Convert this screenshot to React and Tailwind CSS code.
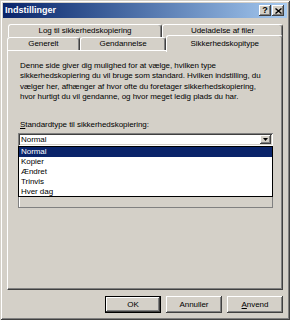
import React from "react";

const raised =
  "shadow-[inset_-1px_-1px_0_#404040,inset_1px_1px_0_#ffffff,inset_-2px_-2px_0_#808080]";

function TitleBtn({ children }) {
  return (
    <div className={`w-[12px] h-[11px] bg-[#d4d0c8] flex items-center justify-center ${raised}`}>
      {children}
    </div>
  );
}

function Tab({ w, label, className = "" }) {
  return (
    <div
      className={`h-full flex items-center justify-center border-t border-l border-white border-r border-r-[#404040] rounded-t-[3px] shadow-[inset_-1px_0_0_#808080] bg-[#d4d0c8] whitespace-nowrap ${w} ${className}`}
    >
      {label}
    </div>
  );
}

function Button({ children, def }) {
  return (
    <div
      className={`w-[56px] h-[17px] bg-[#d4d0c8] flex items-center justify-center ${
        def ? "border border-black" : ""
      } ${raised}`}
    >
      {children}
    </div>
  );
}

export default function App() {
  const items = ["Normal", "Kopier", "Ændret", "Trinvis", "Hver dag"];
  return (
    <div className="w-[290px] h-[320px] bg-[#d4d0c8] p-[3px] flex flex-col overflow-hidden shadow-[inset_1px_1px_0_#d4d0c8,inset_-1px_-1px_0_#404040,inset_2px_2px_0_#ffffff,inset_-2px_-2px_0_#808080] font-['Liberation_Sans',Arial,sans-serif] text-[8px] tracking-[-0.05px] text-black">
      {/* title bar */}
      <div className="h-[15px] shrink-0 flex items-center bg-linear-to-r from-[#0a246a] to-[#a6caf0] pl-[2px] pr-[3px]">
        <span className="font-bold text-white text-[9px] tracking-normal leading-none">
          Indstillinger
        </span>
        <div className="ml-auto flex gap-[1px]">
          <TitleBtn>
            <span className="font-bold text-[9px] leading-none">?</span>
          </TitleBtn>
          <TitleBtn>
            <svg width="7" height="6" viewBox="0 0 7 6">
              <path d="M0.5 0.5 L6.5 5.5 M6.5 0.5 L0.5 5.5" stroke="#000" strokeWidth="1.4" />
            </svg>
          </TitleBtn>
        </div>
      </div>

      {/* tabs */}
      <div className="mt-[6px] mx-[4px] flex flex-col">
        <div className="h-[13px] flex pl-[1px]">
          <Tab w="w-[154px]" label="Log til sikkerhedskopiering" />
          <Tab w="w-[121px]" label="Udeladelse af filer" />
        </div>
        <div className="h-[13px] flex items-end">
          <Tab w="w-[73px]" label="Generelt" />
          <Tab w="w-[87px]" label="Gendannelse" />
          <Tab
            w="w-[117px]"
            label="Sikkerhedskopitype"
            className="!h-[17px] -mb-[2px] relative z-10 items-start pt-[2px]"
          />
        </div>

        {/* panel */}
        <div className="h-[240px] border-t border-l border-white border-r border-b border-r-[#404040] border-b-[#404040] shadow-[inset_-1px_-1px_0_#808080] pt-[10px] pl-[10px]">
          <p className="pl-[2px] leading-[10.3px] whitespace-nowrap">
            Denne side giver dig mulighed for at vælge, hvilken type
            <br />
            sikkerhedskopiering du vil bruge som standard. Hvilken indstilling, du
            <br />
            vælger her, afhænger af hvor ofte du foretager sikkerhedskopiering,
            <br />
            hvor hurtigt du vil gendanne, og hvor meget ledig plads du har.
          </p>
          <div className="mt-[18px] pl-[2px] leading-[10px] whitespace-nowrap">
            <u>S</u>tandardtype til sikkerhedskopiering:
          </div>

          <div className="relative mt-[3px] w-[255px]">
            <div className="h-[13px] bg-white flex items-center pl-[3px] shadow-[inset_1px_1px_0_#808080,inset_-1px_-1px_0_#ffffff,inset_2px_2px_0_#404040,inset_-2px_-2px_0_#d4d0c8]">
              <span className="leading-none">Normal</span>
              <div className={`ml-auto mr-[2px] w-[11px] h-[9px] bg-[#d4d0c8] flex items-center justify-center ${raised}`}>
                <svg width="5" height="3" viewBox="0 0 5 3">
                  <path d="M0 0 H5 L2.5 3 Z" fill="#000" />
                </svg>
              </div>
            </div>
            <div className="mt-[2px] h-[60px] border border-[#808080] shadow-[inset_1px_1px_0_#ffffff]" />

            {/* open dropdown list */}
            <div className="absolute left-0 top-[13px] w-[255px] h-[51px] bg-white border border-black z-20">
              {items.map((it, i) => (
                <div
                  key={it}
                  className={`h-[10px] leading-[10px] pl-[2px] ${
                    i === 0 ? "bg-[#0a246a] text-white" : ""
                  }`}
                >
                  {it}
                </div>
              ))}
            </div>
          </div>
        </div>
      </div>

      {/* buttons */}
      <div className="mt-[6px] flex justify-end gap-[5px] pr-[4px]">
        <Button def>OK</Button>
        <Button>Annuller</Button>
        <Button>
          <span>
            <u>A</u>nvend
          </span>
        </Button>
      </div>
    </div>
  );
}
